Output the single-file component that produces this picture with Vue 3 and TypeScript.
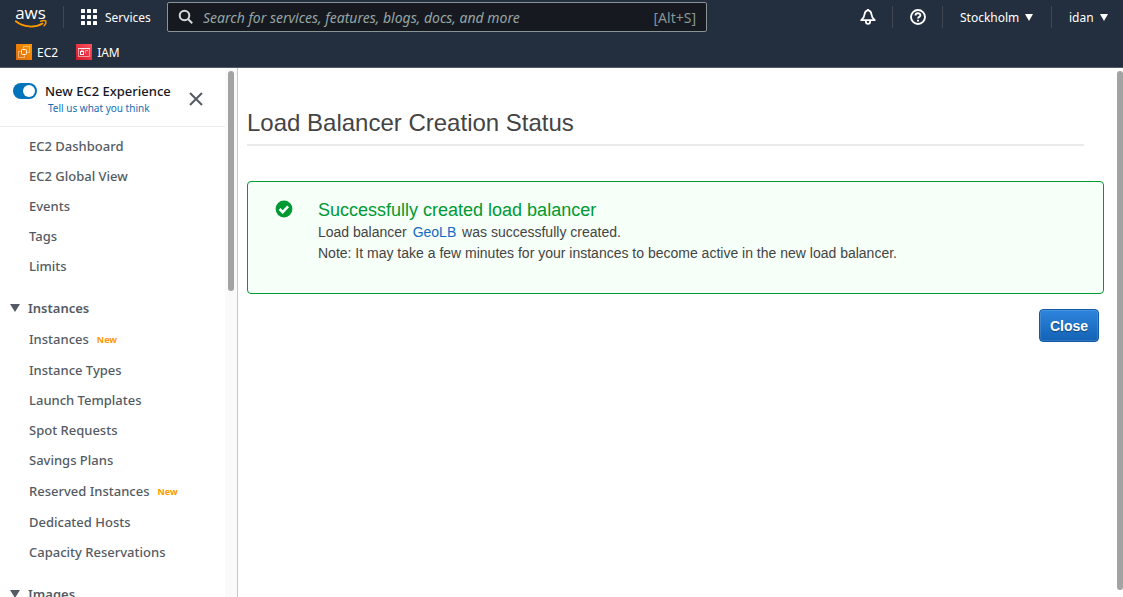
<script setup lang="ts">
import { ref } from 'vue'

interface NavItem {
  label: string
  isNew?: boolean
}
interface NavGroup {
  title?: string
  items: NavItem[]
}

const query = ref('')
const newExperience = ref(true)

const groups: NavGroup[] = [
  {
    items: [
      { label: 'EC2 Dashboard' },
      { label: 'EC2 Global View' },
      { label: 'Events' },
      { label: 'Tags' },
      { label: 'Limits' },
    ],
  },
  {
    title: 'Instances',
    items: [
      { label: 'Instances', isNew: true },
      { label: 'Instance Types' },
      { label: 'Launch Templates' },
      { label: 'Spot Requests' },
      { label: 'Savings Plans' },
      { label: 'Reserved Instances', isNew: true },
      { label: 'Dedicated Hosts' },
      { label: 'Capacity Reservations' },
    ],
  },
  { title: 'Images', items: [] },
]
</script>

<template>
  <div class="app">
    <header class="top">
      <div class="bar">
        <a class="logo" href="#" aria-label="AWS home">
          <span class="logo-word">aws</span>
          <svg class="smile" width="32" height="8" viewBox="0 0 32 8">
            <path d="M.8 1.300C9 7.700 20 8 27.500 3.400" fill="none" stroke="#f90" stroke-width="1.800" stroke-linecap="round" />
            <path d="M25.500 1.300c2-.8 4.200-.9 5.200-.4.500 1-.2 3.400-1.600 4.900" fill="none" stroke="#f90" stroke-width="1.400" stroke-linecap="round" />
          </svg>
        </a>
        <button class="services" type="button">
          <svg width="16" height="16" viewBox="0 0 16 16" fill="#fff">
            <template v-for="r in 3" :key="r">
              <rect v-for="c in 3" :key="c" :x="(c - 1) * 6" :y="(r - 1) * 6" width="4" height="4" rx="0.600" />
            </template>
          </svg>
          Services
        </button>
        <label class="search">
          <svg width="16" height="16" viewBox="0 0 16 16" fill="none" stroke="#d5dbdb" stroke-width="2">
            <circle cx="6.500" cy="6.500" r="4.800" />
            <path d="M10 10l4.200 4.200" />
          </svg>
          <input v-model="query" type="text" aria-label="Search" placeholder="Search for services, features, blogs, docs, and more" />
          <span class="hint">[Alt+S]</span>
        </label>
        <div class="tools">
          <button class="tool icon" type="button" aria-label="Notifications">
            <svg width="16" height="16" viewBox="0 0 16 16" fill="none" stroke="#fff" stroke-width="1.800" stroke-linejoin="round">
              <path d="M8 1.200C5.600 1.800 4.700 3.500 4.500 5.500C4.300 8 3.300 9.500 1.200 11.100H14.800C12.700 9.500 11.700 8 11.500 5.500C11.300 3.500 10.400 1.800 8 1.200Z" />
              <path d="M5.900 11.500v1.200a2.100 2.100 0 0 0 4.200 0v-1.200" />
              <path d="M8 0v2" />
            </svg>
          </button>
          <button class="tool icon help" type="button" aria-label="Help">
            <svg width="16" height="16" viewBox="0 0 16 16" fill="none" stroke="#fff" stroke-width="1.900">
              <circle cx="8" cy="8" r="7" />
              <path d="M5.500 6.400C5.500 3.500 10.400 3.500 10.400 6.200C10.400 7.900 8 7.900 8 9.600" />
              <path d="M8 10.700v1.900" />
            </svg>
          </button>
          <button class="tool region" type="button">
            Stockholm
            <svg width="8" height="7" viewBox="0 0 8 7" fill="#fff"><path d="M0 0h8L4 7z" /></svg>
          </button>
          <button class="tool user" type="button">
            idan
            <svg width="8" height="7" viewBox="0 0 8 7" fill="#fff"><path d="M0 0h8L4 7z" /></svg>
          </button>
        </div>
      </div>
      <nav class="favorites" aria-label="Favorites">
        <a href="#">
          <svg width="16" height="16" viewBox="0 0 16 16" fill="none" stroke="#fff">
            <defs>
              <linearGradient id="ec2" x1="0" y1="1" x2="1" y2="0">
                <stop offset="0" stop-color="#d9680c" />
                <stop offset="1" stop-color="#f90" />
              </linearGradient>
            </defs>
            <rect width="16" height="16" fill="url(#ec2)" stroke="none" />
            <path d="M7.500 4.500v-2h6v6h-2M4.500 7.500h-2v6h6v-2" stroke-opacity="0.450" />
            <rect x="5.500" y="5.500" width="5" height="5" rx="1" stroke-opacity="0.900" />
          </svg>
          EC2
        </a>
        <a href="#">
          <svg width="16" height="16" viewBox="0 0 16 16" fill="none" stroke="#fff">
            <defs>
              <linearGradient id="iam" x1="0" y1="1" x2="1" y2="0">
                <stop offset="0" stop-color="#d0192b" />
                <stop offset="1" stop-color="#ff5260" />
              </linearGradient>
            </defs>
            <rect width="16" height="16" fill="url(#iam)" stroke="none" />
            <path d="M2 4.500h12" stroke-opacity="0.900" />
            <path d="M2.500 5v7.500h11V5" stroke-opacity="0.500" />
            <rect x="4.500" y="7.500" width="3" height="3" stroke-opacity="0.950" />
            <path d="M5.500 7V6h2" stroke-opacity="0.700" />
            <path d="M9 6.500h3M9.500 7v2.500" stroke-opacity="0.450" />
          </svg>
          IAM
        </a>
      </nav>
    </header>

    <div class="body">
      <aside class="side">
        <div class="side-content">
          <div class="experience">
            <input id="exp" v-model="newExperience" class="switch" type="checkbox" />
            <div class="exp-text">
              <label for="exp">New EC2 Experience</label>
              <a href="#">Tell us what you think</a>
            </div>
            <button class="dismiss" type="button" aria-label="Close navigation">
              <svg width="14" height="14" viewBox="0 0 14 14" stroke="#545b64" stroke-width="2"><path d="M1 1l12 12M13 1L1 13" /></svg>
            </button>
          </div>
          <nav class="menu" aria-label="EC2">
            <section v-for="(g, i) in groups" :key="i" class="group">
              <button v-if="g.title" class="group-title" type="button">
                <svg width="10" height="8" viewBox="0 0 10 8" fill="#545b64"><path d="M0 0h10L5 8z" /></svg>
                {{ g.title }}
              </button>
              <a v-for="item in g.items" :key="item.label" class="item" :class="{ fresh: item.isNew }" href="#">
                {{ item.label }}<span v-if="item.isNew" class="new">New</span>
              </a>
            </section>
          </nav>
        </div>
        <div class="side-track"><div class="side-thumb"></div></div>
      </aside>

      <main class="main">
        <div class="page">
          <h1>Load Balancer Creation Status</h1>
          <section class="notice" role="status">
            <svg width="18" height="18" viewBox="0 0 18 18">
              <circle cx="9" cy="9" r="8.400" fill="#093" />
              <path d="M4.600 9l3.100 3.100 5.400-5.700" fill="none" stroke="#fff" stroke-width="2.600" />
            </svg>
            <div>
              <h2>Successfully created load balancer</h2>
              <p>Load balancer <a href="#">GeoLB</a> was successfully created.</p>
              <p>Note: It may take a few minutes for your instances to become active in the new load balancer.</p>
            </div>
          </section>
          <div class="actions"><button class="close" type="button">Close</button></div>
        </div>
        <div class="main-thumb"></div>
      </main>
    </div>
  </div>
</template>

<style>
body {
  margin: 0;
  overflow: hidden;
}
</style>

<style scoped>
.app {
  height: 100vh;
  display: flex;
  flex-direction: column;
  font-family: "Noto Sans", "Open Sans", sans-serif;
  font-size: 13px;
  color: #545b64;
  background: #fff;
}
.app * {
  box-sizing: border-box;
}
button {
  font: inherit;
  color: inherit;
  background: none;
  border: 0;
  padding: 0;
  cursor: pointer;
}
a {
  text-decoration: none;
  color: inherit;
}
svg {
  flex: none;
  display: block;
}
.top {
  flex: none;
  background: #232f3e;
  color: #fff;
  border-bottom: 1px solid #545b64;
}
.bar {
  display: flex;
  align-items: center;
  height: 36px;
}
.logo {
  display: flex;
  flex-direction: column;
  align-items: center;
  width: 64px;
  height: 22px;
  margin-bottom: 2px;
  border-right: 1px solid #414750;
  padding-right: 2px;
}
.logo-word {
  font: 500 17px/14px "Open Sans", sans-serif;
}
.services {
  display: flex;
  align-items: center;
  gap: 8px;
  width: 103px;
  margin-bottom: 2px;
  padding-left: 17px;
  font-size: 12px;
}
.search {
  display: flex;
  align-items: center;
  flex: 0 1 540px;
  height: 30px;
  margin-bottom: 2px;
  padding: 0 10px;
  border: 1px solid #879596;
  border-radius: 2px;
  background: #16191f;
}
.search input {
  flex: 1;
  min-width: 0;
  margin: 0;
  padding: 0 0 0 9px;
  border: 0;
  outline: 0;
  background: none;
  color: #fff;
  font: italic 14px "Noto Sans", sans-serif;
}
.search input::placeholder {
  color: #95a5a6;
  opacity: 1;
}
.hint {
  color: #879596;
  font-size: 14px;
}
.tools {
  display: flex;
  margin-left: auto;
  margin-bottom: 2px;
}
.tool {
  display: flex;
  align-items: center;
  gap: 6px;
  height: 22px;
  font-size: 12px;
}
.tool + .tool {
  border-left: 1px solid #414750;
}
.icon {
  width: 32px;
}
.help {
  width: 50px;
  padding-left: 17px;
}
.region {
  width: 109px;
  padding-left: 17px;
}
.user {
  width: 72px;
  padding-left: 17px;
}
.favorites {
  display: flex;
  gap: 18px;
  padding: 1px 16px 0;
  height: 31px;
  align-items: center;
}
.favorites a {
  display: flex;
  align-items: center;
  gap: 5px;
  font-size: 12px;
}
.body {
  flex: 1;
  min-height: 0;
  display: flex;
}
.side {
  flex: none;
  width: 238px;
  display: flex;
  border-right: 1px solid #c4caca;
}
.side-content {
  flex: 1;
  overflow: hidden;
  font-weight: 500;
}
.side-track {
  width: 12px;
  padding: 3px;
  background: #fafafa;
}
.side-thumb {
  width: 6px;
  height: 42%;
  border-radius: 3px;
  background: #a3a3a3;
}
.experience {
  display: flex;
  height: 59px;
  padding: 13px 12px 0 13px;
  border-bottom: 1px solid #eaeded;
}
.switch {
  appearance: none;
  flex: none;
  width: 24px;
  height: 16px;
  margin: 2px 8px 0 0;
  padding: 2px;
  border-radius: 8px;
  background: #879596;
}
.switch::before {
  content: "";
  display: block;
  width: 12px;
  height: 12px;
  border-radius: 50%;
  background: #fff;
}
.switch:checked {
  background: #0073bb;
  padding-left: 10px;
}
.exp-text {
  display: flex;
  flex-direction: column;
  width: 144px;
  white-space: nowrap;
}
.exp-text label {
  color: #16191f;
  line-height: 20px;
}
.exp-text a {
  padding-left: 3px;
  font-size: 10px;
  font-weight: 400;
  line-height: 15px;
  color: #146eb4;
}
.dismiss {
  height: 14px;
  margin-top: 11px;
}
.menu {
  padding-top: 4px;
}
.group + .group {
  margin-top: 12px;
}
.group-title {
  display: flex;
  align-items: center;
  gap: 8px;
  width: 100%;
  height: 30px;
  padding-left: 10px;
  font-weight: 600;
}
.item {
  display: flex;
  align-items: center;
  height: 30px;
  padding-left: 29px;
  white-space: nowrap;
}
.fresh {
  height: 32px;
}
.new {
  margin-left: 8px;
  padding-top: 1px;
  color: #ff9900;
  font-size: 9px;
  font-weight: 700;
}
.main {
  flex: 1;
  min-width: 0;
  display: flex;
  font-family: "Liberation Sans", Arial, sans-serif;
  font-size: 14px;
  color: #444;
}
.page {
  flex: 1;
  min-width: 0;
  padding: 40px 13px 0 9px;
}
.main-thumb {
  flex: none;
  width: 6px;
  margin: 3px 0 7px;
  border-radius: 3px;
  background: #a3a3a3;
}
h1 {
  margin: 0 20px 35px 0;
  padding-bottom: 7px;
  border-bottom: 2px solid #eaeaea;
  font-size: 24px;
  font-weight: 400;
  line-height: 29px;
}
.notice {
  display: flex;
  gap: 25px;
  min-height: 113px;
  padding: 18px 27px;
  border: 1px solid #093;
  border-radius: 4px;
  background: #f6fff8;
}
.notice h2 {
  margin: 0 0 1px;
  font-size: 18px;
  font-weight: 400;
  line-height: 21px;
  color: #093;
}
.notice p {
  margin: 0;
  line-height: 21px;
}
.notice a {
  margin: 0 2px;
  color: #146ac4;
}
.actions {
  display: flex;
  justify-content: flex-end;
  padding: 15px 5px 0;
}
.close {
  width: 60px;
  height: 33px;
  border: 1px solid #1259a8;
  border-radius: 4px;
  background: linear-gradient(#2e85dc, #1362b5);
  box-shadow: inset 0 0 0 1px rgba(255, 255, 255, 0.12);
  color: #fff;
  font-weight: 700;
  text-shadow: 0 1px 1px rgba(0, 0, 0, 0.4);
}
</style>
